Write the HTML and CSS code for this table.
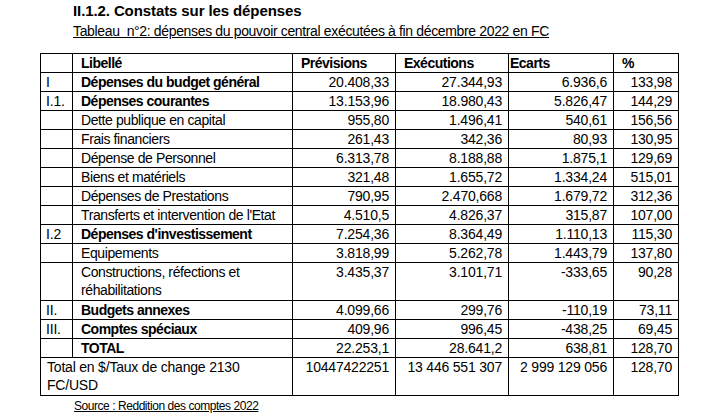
FILE: index.html
```html
<!DOCTYPE html>
<html lang="fr">
<head>
<meta charset="utf-8">
<title>Constats sur les dépenses</title>
<link rel="stylesheet" href="styles.css">
</head>
<body>
<div class="page">
  <h2 class="title">II.1.2. Constats sur les dépenses</h2>
  <p class="caption">Tableau&nbsp; n°2: dépenses du pouvoir central exécutées à fin décembre 2022 en FC</p>
  <table class="data">
    <colgroup>
      <col class="c-num"><col class="c-lib"><col class="c-prev"><col class="c-exec"><col class="c-ecart"><col class="c-pct">
    </colgroup>
    <thead>
      <tr class="b">
        <th></th><th class="l">Libellé</th><th class="l">Prévisions</th><th class="l">Exécutions</th><th class="l tight">Ecarts</th><th class="l">%</th>
      </tr>
    </thead>
    <tbody>
      <tr><td class="idx">I</td><td class="l b">Dépenses du budget général</td><td>20.408,33</td><td>27.344,93</td><td>6.936,6</td><td>133,98</td></tr>
      <tr><td class="idx">I.1.</td><td class="l b">Dépenses courantes</td><td>13.153,96</td><td>18.980,43</td><td>5.826,47</td><td>144,29</td></tr>
      <tr><td class="idx"></td><td class="l">Dette publique en capital</td><td>955,80</td><td>1.496,41</td><td>540,61</td><td>156,56</td></tr>
      <tr><td class="idx"></td><td class="l">Frais financiers</td><td>261,43</td><td>342,36</td><td>80,93</td><td>130,95</td></tr>
      <tr><td class="idx"></td><td class="l">Dépense de Personnel</td><td>6.313,78</td><td>8.188,88</td><td>1.875,1</td><td>129,69</td></tr>
      <tr><td class="idx"></td><td class="l">Biens et matériels</td><td>321,48</td><td>1.655,72</td><td>1.334,24</td><td>515,01</td></tr>
      <tr><td class="idx"></td><td class="l">Dépenses de Prestations</td><td>790,95</td><td>2.470,668</td><td>1.679,72</td><td>312,36</td></tr>
      <tr><td class="idx"></td><td class="l">Transferts et intervention de l'Etat</td><td>4.510,5</td><td>4.826,37</td><td>315,87</td><td>107,00</td></tr>
      <tr><td class="idx">I.2</td><td class="l b">Dépenses d'investissement</td><td>7.254,36</td><td>8.364,49</td><td>1.110,13</td><td>115,30</td></tr>
      <tr><td class="idx"></td><td class="l">Equipements</td><td>3.818,99</td><td>5.262,78</td><td>1.443,79</td><td>137,80</td></tr>
      <tr class="tall"><td class="idx"></td><td class="l">Constructions, réfections et<br>réhabilitations</td><td>3.435,37</td><td>3.101,71</td><td>-333,65</td><td>90,28</td></tr>
      <tr><td class="idx">II.</td><td class="l b">Budgets annexes</td><td>4.099,66</td><td>299,76</td><td>-110,19</td><td>73,11</td></tr>
      <tr><td class="idx">III.</td><td class="l b">Comptes spéciaux</td><td>409,96</td><td>996,45</td><td>-438,25</td><td>69,45</td></tr>
      <tr><td class="idx"></td><td class="l b">TOTAL</td><td>22.253,1</td><td>28.641,2</td><td>638,81</td><td>128,70</td></tr>
      <tr class="tall"><td class="l foot" colspan="2">Total en $/Taux de change 2130<br>FC/USD</td><td>10447422251</td><td>13 446 551 307</td><td>2 999 129 056</td><td>128,70</td></tr>
    </tbody>
  </table>
  <p class="source">Source : Reddition des comptes 2022</p>
</div>
</body>
</html>
```
FILE: styles.css
```css
html, body {
  margin: 0;
  padding: 0;
  background: #ffffff;
}
body {
  font-family: "Liberation Sans", Arial, sans-serif;
  color: #000;
}
.page {
  padding: 2px 0 0 40px;
  width: 680px;
}
.title {
  margin: 0 0 0 33px;
  font-size: 15px;
  line-height: 18px;
  font-weight: bold;
  letter-spacing: -0.1px;
}
.caption {
  margin: 2px 0 0 33px;
  font-size: 14px;
  line-height: 18px;
  letter-spacing: -0.35px;
  text-decoration: underline;
}
.data {
  margin-top: 13px;
  border-collapse: collapse;
  table-layout: fixed;
  width: 639px;
  font-size: 14px;
  line-height: 18px;
}
.c-num { width: 32px; }
.c-lib { width: 220px; }
.c-prev { width: 103px; }
.c-exec { width: 113px; }
.c-ecart { width: 105px; }
.c-pct { width: 65px; }
.data th, .data td {
  border: 1px solid #000;
  padding: 0 6px 0 8px;
  height: 18px;
  vertical-align: top;
  text-align: right;
  font-weight: normal;
  white-space: nowrap;
  letter-spacing: -0.2px;
}
.data .l { text-align: left; letter-spacing: -0.4px; }
.data .b, .data tr.b th { font-weight: bold; letter-spacing: -0.5px; }
.data .idx { text-align: left; padding-left: 5px; }
.data .tight { padding-left: 1px; }
.data .foot { padding-left: 6px; letter-spacing: -0.2px; }
.data tr.tall td { height: 37px; }
.source {
  margin: 3px 0 0 34px;
  font-size: 12px;
  line-height: 14px;
  letter-spacing: -0.45px;
  text-decoration: underline;
}
```
